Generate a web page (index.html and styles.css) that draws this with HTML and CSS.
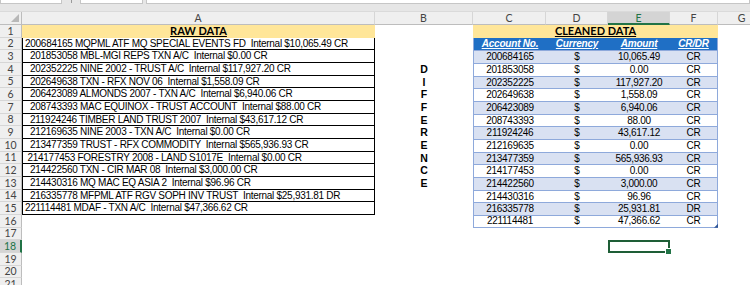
FILE: index.html
```html
<!DOCTYPE html>
<html lang="en">
<head>
  <meta charset="UTF-8" />
  <title>Raw vs Cleaned Data</title>
  <link rel="stylesheet" href="styles.css">
</head>
<body>
  <div class="formula-bar">
    <div class="fbox name-box"></div>
    <div class="fsep"><span class="dots"></span></div>
    <div class="fbox fx-box"></div>
    <div class="fbox input-box"></div>
  </div>

  <div class="sheet">
    <!-- column headers -->
    <div class="corner"></div>
    <div class="ch">A</div>
    <div class="ch">B</div>
    <div class="ch">C</div>
    <div class="ch">D</div>
    <div class="ch sel">E</div>
    <div class="ch">F</div>
    <div class="ch">G</div>
    <div class="ch"></div>

    <!-- row 1 -->
    <div class="rh">1</div>
    <div class="title">RAW DATA</div>
    <div></div>
    <div class="title wide">CLEANED DATA</div>
    <div></div><div></div>

    <!-- row 2 -->
    <div class="rh">2</div>
    <div class="raw">200684165 MQPML ATF MQ SPECIAL EVENTS FD  Internal $10,065.49 CR</div>
    <div></div>
    <div class="th first">Account No.</div>
    <div class="th">Currency</div>
    <div class="th">Amount</div>
    <div class="th last">CR/DR</div>
    <div></div><div></div>

    <!-- row 3 -->
    <div class="rh">3</div>
    <div class="raw">  201853058 MBL-MGI REPS TXN A/C  Internal $0.00 CR</div>
    <div></div>
    <div class="td band first">200684165</div><div class="td band">$</div><div class="td band">10,065.49</div><div class="td band last">CR</div>
    <div></div><div></div>

    <div class="rh">4</div>
    <div class="raw">  202352225 NINE 2002 - TRUST A/C  Internal $117,927.20 CR</div>
    <div class="letter">D</div>
    <div class="td first">201853058</div><div class="td">$</div><div class="td">0.00</div><div class="td last">CR</div>
    <div></div><div></div>

    <div class="rh">5</div>
    <div class="raw">  202649638 TXN - RFX NOV 06  Internal $1,558.09 CR</div>
    <div class="letter">I</div>
    <div class="td band first">202352225</div><div class="td band">$</div><div class="td band">117,927.20</div><div class="td band last">CR</div>
    <div></div><div></div>

    <div class="rh">6</div>
    <div class="raw">  206423089 ALMONDS 2007 - TXN A/C  Internal $6,940.06 CR</div>
    <div class="letter">F</div>
    <div class="td first">202649638</div><div class="td">$</div><div class="td">1,558.09</div><div class="td last">CR</div>
    <div></div><div></div>

    <div class="rh">7</div>
    <div class="raw">  208743393 MAC EQUINOX - TRUST ACCOUNT  Internal $88.00 CR</div>
    <div class="letter">F</div>
    <div class="td band first">206423089</div><div class="td band">$</div><div class="td band">6,940.06</div><div class="td band last">CR</div>
    <div></div><div></div>

    <div class="rh">8</div>
    <div class="raw">  211924246 TIMBER LAND TRUST 2007  Internal $43,617.12 CR</div>
    <div class="letter">E</div>
    <div class="td first">208743393</div><div class="td">$</div><div class="td">88.00</div><div class="td last">CR</div>
    <div></div><div></div>

    <div class="rh">9</div>
    <div class="raw">  212169635 NINE 2003 - TXN A/C  Internal $0.00 CR</div>
    <div class="letter">R</div>
    <div class="td band first">211924246</div><div class="td band">$</div><div class="td band">43,617.12</div><div class="td band last">CR</div>
    <div></div><div></div>

    <div class="rh">10</div>
    <div class="raw">  213477359 TRUST - RFX COMMODITY  Internal $565,936.93 CR</div>
    <div class="letter">E</div>
    <div class="td first">212169635</div><div class="td">$</div><div class="td">0.00</div><div class="td last">CR</div>
    <div></div><div></div>

    <div class="rh">11</div>
    <div class="raw"> 214177453 FORESTRY 2008 - LAND S1017E  Internal $0.00 CR</div>
    <div class="letter">N</div>
    <div class="td band first">213477359</div><div class="td band">$</div><div class="td band">565,936.93</div><div class="td band last">CR</div>
    <div></div><div></div>

    <div class="rh">12</div>
    <div class="raw">  214422560 TXN - CIR MAR 08  Internal $3,000.00 CR</div>
    <div class="letter">C</div>
    <div class="td first">214177453</div><div class="td">$</div><div class="td">0.00</div><div class="td last">CR</div>
    <div></div><div></div>

    <div class="rh">13</div>
    <div class="raw">  214430316 MQ MAC EQ ASIA 2  Internal $96.96 CR</div>
    <div class="letter">E</div>
    <div class="td band first">214422560</div><div class="td band">$</div><div class="td band">3,000.00</div><div class="td band last">CR</div>
    <div></div><div></div>

    <div class="rh">14</div>
    <div class="raw">  216335778 MFPML ATF RGV SOPH INV TRUST  Internal $25,931.81 DR</div>
    <div></div>
    <div class="td first">214430316</div><div class="td">$</div><div class="td">96.96</div><div class="td last">CR</div>
    <div></div><div></div>

    <div class="rh">15</div>
    <div class="raw">221114481 MDAF - TXN A/C  Internal $47,366.62 CR</div>
    <div></div>
    <div class="td band first">216335778</div><div class="td band">$</div><div class="td band">25,931.81</div><div class="td band last">DR</div>
    <div></div><div></div>

    <div class="rh">16</div>
    <div></div>
    <div></div>
    <div class="td end first">221114481</div><div class="td end">$</div><div class="td end">47,366.62</div><div class="td end last resize">CR</div>
    <div></div><div></div>

    <div class="rh">17</div>
    <div class="blank"></div>

    <div class="rh active">18</div>
    <div></div><div></div><div></div><div></div>
    <div class="cursor"></div>
    <div class="blank3"></div>

    <div class="rh">19</div>
    <div class="blank"></div>

    <div class="rh">20</div>
    <div class="blank"></div>

    <div class="rh">21</div>
    <div class="blank"></div>
  </div>
</body>
</html>
```

FILE: styles.css
```css
* {
  box-sizing: border-box;
}
body, html {
  margin: 0;
  padding: 0;
  background: #fff;
  overflow: hidden;
  font-family: 'Liberation Sans', Arial, sans-serif;
  color: #000;
}

.formula-bar {
  display: flex;
  height: 12px;
  background: #e6e6e6;
  border-bottom: 1px solid #dadada;
}
.fbox {
  height: 4px;
  background: #fff;
  border: 1px solid #c6c6c6;
  border-top: none;
}
.name-box { width: 62px; }
.fsep {
  width: 18px;
  display: flex;
  justify-content: center;
}
.dots {
  width: 1px;
  height: 3px;
  background: #9a9a9a;
}
.fx-box { width: 63px; }
.input-box { flex: 1; margin-left: 3px; }

.sheet {
  display: grid;
  grid-template-columns: 22px 353px 98px 73px 62px 62px 48px 48px 40px;
  grid-template-rows: 13px repeat(21, 12.68px);
  height: 273px;
}

.corner, .ch, .rh {
  background: #efefef;
  color: #444;
  font-family: Lato, 'Open Sans', sans-serif;
  font-size: 10.5px;
}
.corner {
  position: relative;
  border-right: 1px solid #bdbdbd;
  border-bottom: 1px solid #bdbdbd;
}
.corner::after {
  content: '';
  position: absolute;
  right: 2px;
  bottom: 2px;
  width: 8px;
  height: 8px;
  background: #b8b8b8;
  clip-path: polygon(100% 0, 100% 100%, 0 100%);
}
.ch {
  display: flex;
  align-items: center;
  justify-content: center;
  border-right: 1px solid #d6d6d6;
  border-bottom: 1px solid #bdbdbd;
}
.ch.sel {
  background: #d4d4d4;
  border-bottom: 2px solid #217346;
  color: #217346;
}
.rh {
  grid-column: 1;
  display: flex;
  align-items: center;
  justify-content: center;
  border-right: 1px solid #bdbdbd;
  border-bottom: 1px solid #d6d6d6;
  line-height: 1;
}
.rh.active {
  background: #d4d4d4;
  color: #217346;
  border-right: 2px solid #217346;
}

.title {
  background: #ffe699;
  text-align: center;
  font-family: Lato, 'Open Sans', sans-serif;
  font-weight: 700;
  font-size: 11px;
  line-height: 12.68px;
  text-decoration: underline;
  text-underline-offset: 1px;
}
.title.wide {
  grid-column: span 4;
}

.raw {
  grid-column: 2;
  white-space: pre;
  overflow: hidden;
  font-size: 10px;
  letter-spacing: -0.28px;
  line-height: 11.68px;
  padding-left: 2px;
  border-left: 1px solid #000;
  border-right: 1px solid #000;
  border-bottom: 1px solid #000;
}

.letter {
  text-align: center;
  font-weight: 700;
  font-size: 10.5px;
  line-height: 12.68px;
}

.th {
  background: #1f6fc5;
  color: #fff;
  font-weight: 700;
  font-style: italic;
  text-decoration: underline;
  font-size: 10px;
  letter-spacing: -0.2px;
  line-height: 12.68px;
  text-align: center;
  white-space: nowrap;
}
.td {
  text-align: center;
  font-size: 10px;
  letter-spacing: -0.28px;
  line-height: 11.68px;
  border-top: 1px solid #8ea9db;
}
.td.band {
  background: #d9e1f2;
}
.td.end {
  border-bottom: 1px solid #8ea9db;
  line-height: 10.68px;
}
.first {
  border-left: 1px solid #8ea9db;
}
.last {
  border-right: 1px solid #8ea9db;
}
.resize {
  position: relative;
}
.resize::after {
  content: '';
  position: absolute;
  right: -1px;
  bottom: -1px;
  width: 4px;
  height: 4px;
  background: #2f5597;
  clip-path: polygon(100% 0, 100% 100%, 0 100%);
}

.blank {
  grid-column: 2 / -1;
}
.blank3 {
  grid-column: 7 / -1;
}
.cursor {
  position: relative;
  border: 2px solid #1e5e36;
}
.cursor::after {
  content: '';
  position: absolute;
  right: -4px;
  bottom: -4px;
  width: 5px;
  height: 5px;
  background: #217346;
  border: 1px solid #fff;
}
```
